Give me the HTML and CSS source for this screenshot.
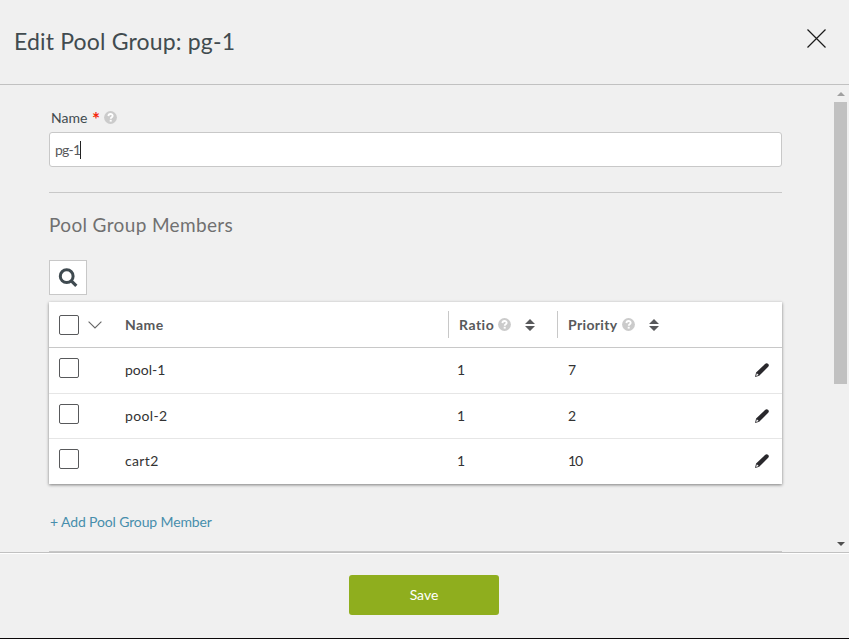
FILE: index.html
```html
<!DOCTYPE html>
<html lang="en">
<head>
<meta charset="utf-8">
<title>Edit Pool Group</title>
<link rel="stylesheet" href="styles.css">
</head>
<body>
<svg class="defs" width="0" height="0">
  <symbol id="help" viewBox="0 0 13 13"><circle cx="6.5" cy="6.5" r="6.4" fill="#cbcbcb"/><path d="M4.4 5.1C4.5 2.3 8.7 2.4 8.7 4.8C8.7 6.3 6.7 6.1 6.7 7.8" fill="none" stroke="#fff" stroke-width="1.8"/><rect x="5.7" y="8.8" width="2" height="1.8" fill="#fff"/></symbol>
  <symbol id="sort" viewBox="0 0 10 12"><path d="M0 5L5 0L10 5ZM0 7H10L5 12Z" fill="#58595b"/></symbol>
  <symbol id="pencil" viewBox="0 0 16 16"><path d="M1 15L2.1 10.6L11 2Q12.6 .4 14 1.8Q15.6 3.2 14.2 4.8L5.2 13.7Z" fill="#29282c"/><path d="M2.8 11.2L4.7 13.1L2.1 13.9Z" fill="#fff"/></symbol>
</svg>
<div class="modal">
  <header class="header">
    <h1 class="title">Edit Pool Group: pg-1</h1>
    <svg class="close" width="20" height="20" viewBox="0 0 20 20"><path d="M.5 .5L18.5 18.5M18.5 .5L.5 18.5" stroke="#1b1b1b" stroke-width="1.2"/></svg>
  </header>
  <main class="body">
    <div class="form">
      <div class="label"><span class="label-text">Name</span><span class="star">*</span><svg class="help"><use href="#help"/></svg></div>
      <div class="input"><span class="value">pg-1</span><i class="caret"></i></div>
      <hr class="rule">
      <h2 class="section">Pool Group Members</h2>
      <div class="search"><svg width="20" height="20" viewBox="0 0 20 20"><circle cx="8.7" cy="8.2" r="6.4" fill="none" stroke="#3f4a50" stroke-width="3"/><path d="M13.3 12.8L18.3 17.8" stroke="#3f4a50" stroke-width="3.2"/></svg></div>
      <div class="table">
        <div class="row head">
          <div class="check"><i class="box"></i><svg class="chevron" width="14" height="8" viewBox="0 0 14 8"><path d="M.6 .6L7 7L13.4 .6" fill="none" stroke="#666" stroke-width="1.1"/></svg></div>
          <div class="name"><span class="th-name">Name</span></div>
          <div class="col"><span class="th-ratio">Ratio</span><svg class="help"><use href="#help"/></svg><svg class="sort"><use href="#sort"/></svg></div>
          <div class="col"><span class="th-priority">Priority</span><svg class="help"><use href="#help"/></svg><svg class="sort"><use href="#sort"/></svg></div>
        </div>
        <div class="row raised"><div class="check"><i class="box"></i></div><div class="name">pool-1</div><div class="col ratio">1</div><div class="col">7</div><svg class="pencil"><use href="#pencil"/></svg></div>
        <div class="row short"><div class="check"><i class="box"></i></div><div class="name wide">pool-2</div><div class="col ratio">1</div><div class="col">2</div><svg class="pencil"><use href="#pencil"/></svg></div>
        <div class="row short raised"><div class="check"><i class="box"></i></div><div class="name wide">cart2</div><div class="col ratio">1</div><div class="col ten">10</div><svg class="pencil"><use href="#pencil"/></svg></div>
      </div>
      <div class="add"><span class="add-text">+ Add Pool Group Member</span></div>
      <hr class="rule last">
    </div>
    <div class="scrollbar"><i class="up"></i><i class="thumb"></i><i class="down"></i></div>
  </main>
  <footer class="footer"><button class="save">Save</button></footer>
</div>
</body>
</html>
```
FILE: styles.css
```css
* { box-sizing: border-box; }
body { margin: 0; background: #f0f0f0; font: 14px/20px Lato, "Liberation Sans", sans-serif; color: #414b4f; overflow: hidden; }
.defs { display: block; height: 0; }
.modal { height: 639px; display: flex; flex-direction: column; border-bottom: 1px solid #0b0809; }
.header { height: 85px; border-bottom: 1px solid #c1c1c1; display: flex; justify-content: space-between; padding: 25px 22px 0 14px; }
.title { margin: 0; font-size: 23px; line-height: 32px; font-weight: 400; letter-spacing: .17px; }
.close { margin-top: 4px; }
.body { height: 467px; display: flex; justify-content: space-between; overflow: hidden; }
.form { width: 733px; margin-left: 49px; padding-top: 23px; }
.label { height: 24px; display: flex; padding-left: 2px; }
.label-text { width: 41px; }
.star { width: 12px; color: #f5270b; font-size: 19px; font-weight: 700; line-height: 22px; }
.help { width: 13px; height: 13px; flex: none; }
.label .help { margin-top: 3px; }
.input { height: 35px; background: #fff; border: 1px solid #c8c8c8; border-radius: 3px; display: flex; align-items: center; padding-left: 5px; color: #58595b; }
.value { letter-spacing: -.8px; }
.caret { width: 1px; height: 18px; background: #222; }
.rule { margin: 25px 0 0; border: 0; height: 1px; background: #c8c8c8; }
.section { margin: 20px 0 23px; font-size: 19px; line-height: 24px; font-weight: 400; color: #707071; letter-spacing: .36px; }
.search { width: 38px; height: 35px; background: #fff; border: 1px solid #c8c8c8; display: flex; align-items: center; justify-content: center; }
.table { margin-top: 7px; height: 182px; background: #fff; box-shadow: 0 1px 3px rgba(0,0,0,.48); }
.row { display: flex; height: 46px; align-items: center; border-bottom: 1px solid #e6e6e6; color: #333; }
.row.short { height: 45px; }
.row.raised { padding-bottom: 2px; }
.row:last-child { border: 0; }
.head { border-color: #c8c8c8; color: #58595b; font-weight: 700; }
.check { width: 76px; padding-left: 10px; display: flex; align-items: center; }
.box { width: 20px; height: 20px; border: 1px solid #58595b; border-radius: 2px; background: #fff; margin-top: -4px; }
.head .box { margin: 0; }
.chevron { margin-left: 9px; }
.name { width: 323px; }
.name.wide { letter-spacing: .35px; }
.th-name { letter-spacing: .4px; }
.col { width: 109px; padding-left: 11px; display: flex; align-items: center; }
.head .col { height: 27px; border-left: 1px solid #c8c8c8; padding-left: 10px; }
.th-ratio { letter-spacing: .5px; }
.th-priority { letter-spacing: .35px; }
.col .help { margin-left: 4px; }
.sort { width: 10px; height: 12px; margin-left: 14px; flex: none; }
.ratio { text-indent: -2px; }
.ten { letter-spacing: -1px; }
.pencil { width: 16px; height: 16px; margin-left: 88px; }
.add { margin-top: 28px; padding-left: 1px; height: 20px; color: #478eac; letter-spacing: -.13px; }
.last { margin-top: 19px; }
.scrollbar { width: 13px; margin-right: 2px; display: flex; flex-direction: column; align-items: center; }
.up { border: 4px solid transparent; border-top: 0; border-bottom: 4px solid #a0a0a0; margin: 7px 0 6px; }
.thumb { width: 13px; height: 282px; background: #c1c1c1; }
.down { border: 4px solid transparent; border-bottom: 0; border-top: 4px solid #505050; margin-top: 158px; }
.footer { height: 86px; border-top: 1px solid #c1c1c1; box-shadow: inset 0 1px #fff; display: flex; justify-content: center; padding: 22px 1px 0 0; }
.save { width: 150px; height: 40px; background: #8fae1e; border: 0; border-radius: 3px; color: #fff; font: 14px Lato, sans-serif; padding: 0 0 2px; }
```
